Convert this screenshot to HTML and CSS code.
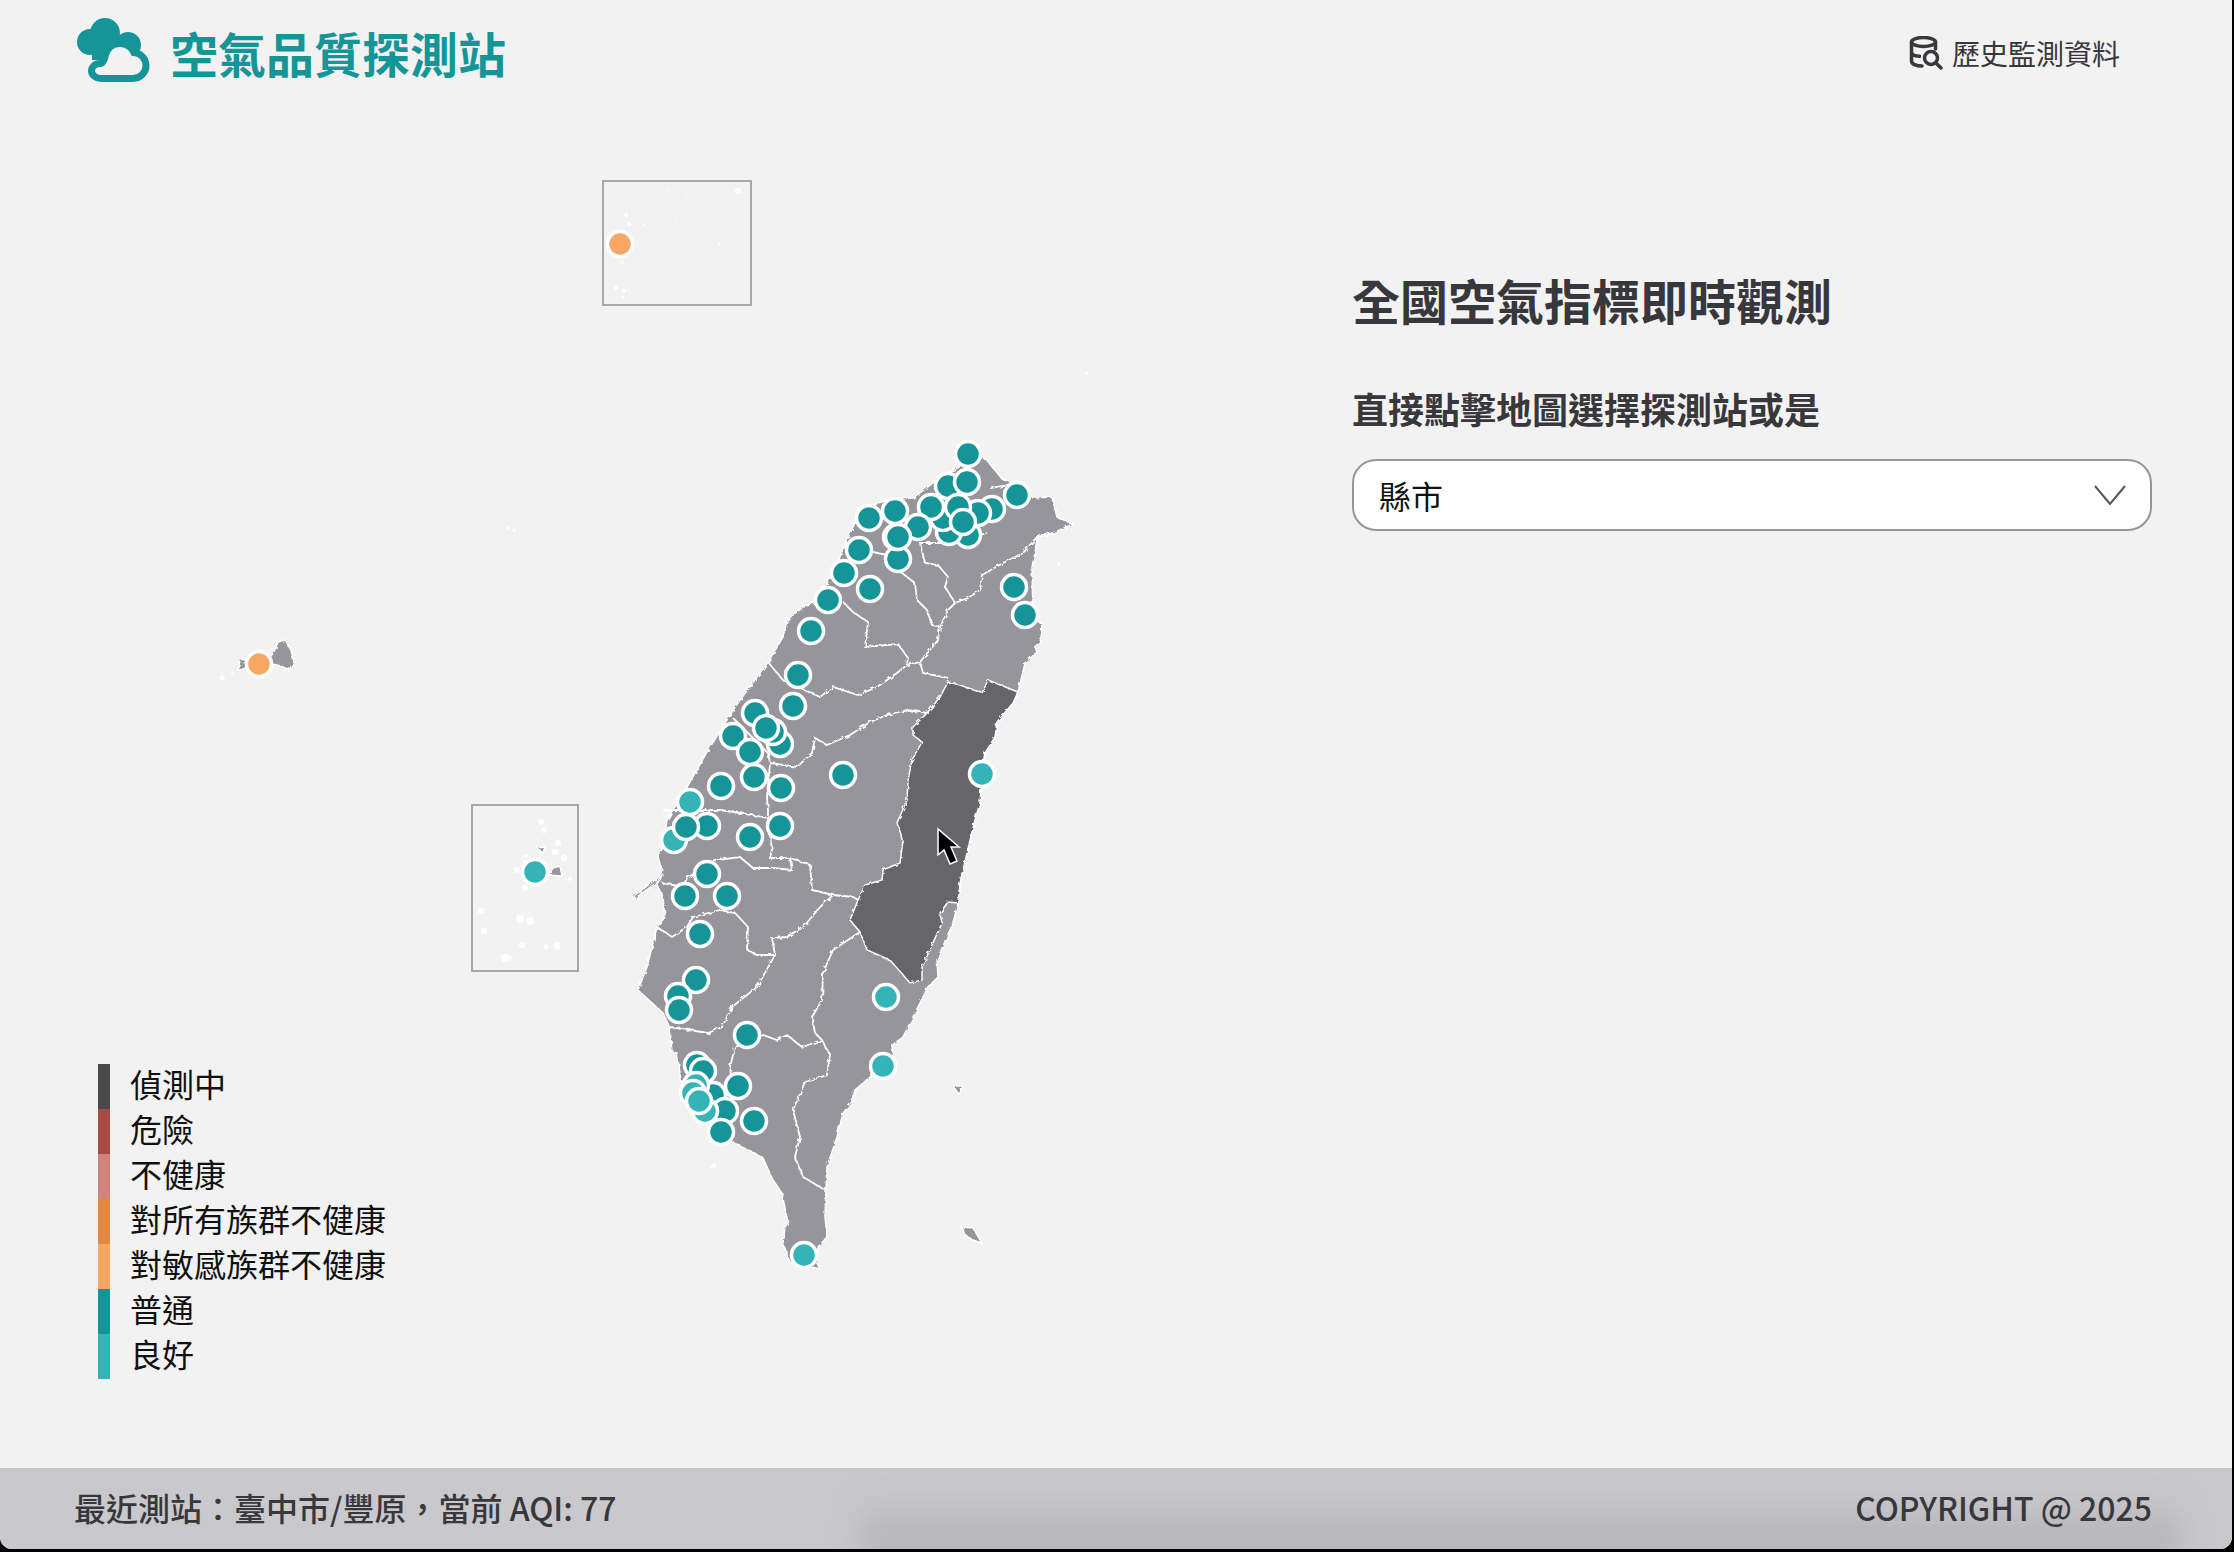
FILE: index.html
```html
<!DOCTYPE html>
<html lang="zh-Hant">
  <head>
    <meta charset="UTF-8" />
    <meta name="viewport" content="width=device-width, initial-scale=1.0" />
    <title>空氣品質探測站</title>
    <link rel="stylesheet" href="styles.css">
  </head>
  <body>
    <div class="page">
      <!-- Header -->
      <header class="top-bar">
        <div class="brand">
          <svg class="brand-icon" viewBox="76 16 76 68">
            <circle class="logo-fill" cx="105" cy="33" r="15" />
            <circle class="logo-fill" cx="90" cy="42" r="13" />
            <circle class="logo-fill" cx="128" cy="45" r="13" />
            <rect class="logo-fill" x="92" y="36" width="34" height="24" />
            <path class="logo-front" d="M101 78.5H133C141 78.5 146 72 146 65.5C146 58 140 53 134 52.5C132 47 126 43.5 120 43.5C112 43.5 107 49 105.5 55C105 60 102 63.5 100 63.5C95 63.5 91.5 67 91.5 71C91.5 75 96 78.5 101 78.5Z" />
          </svg>
          <span class="brand-name">空氣品質探測站</span>
        </div>
        <a class="history-link">
          <svg class="history-icon" viewBox="0 0 34 34">
            <ellipse cx="14.500" cy="6" rx="12" ry="4.500" />
            <path d="M2.500 6V25C2.500 28 7 30 13 30M2.500 16C2.500 18.500 6 20 10.500 20.300M26.500 6V13" />
            <circle cx="22" cy="22" r="6.500" />
            <path d="M27 27L32 32" />
          </svg>
          <span>歷史監測資料</span>
        </a>
      </header>

      <main class="content">
        <!-- Map -->
        <div class="map-area">
          <svg class="map" viewBox="0 110 1330 1359">
            <defs>
              <filter id="rough" x="-5%" y="-5%" width="110%" height="110%">
                <feTurbulence type="fractalNoise" baseFrequency="0.22" numOctaves="2" seed="4" />
                <feDisplacementMap in="SourceGraphic" scale="4" />
              </filter>
            </defs>

            <rect class="inset" x="603" y="181" width="148" height="124" />
            <rect class="inset" x="472" y="805" width="106" height="166" />

            <g filter="url(#rough)">
              <path class="land" d="M948 473L968 462L985 458L1003 480L1023 483L1033 498L1052 497L1057 517L1073 524L1053 533L1037 537L1035 553L1032 567L1033 620L1042 623L1041 640L1035 647L1037 652L1025 663L1018 692L1013 703L997 722L995 737L985 753L983 763L980 803L975 820L967 853L960 883L958 903L953 923L937 960L938 977L928 987L913 1017L903 1037L892 1045L893 1053L870 1077L855 1090L852 1102L843 1113L837 1137L827 1167L826 1190L825 1217L827 1237L818 1247L817 1263L820 1269L790 1262L783 1243L785 1227L788 1223L782 1193L773 1180L763 1158L733 1142L720 1137L693 1113L683 1093L677 1053L672 1052L670 1028L663 1013L640 992L638 990L647 967L657 927L665 917L663 897L657 885L662 870L658 857L663 847L667 820L677 803L687 787L707 752L735 707L768 662L783 637L787 620L803 607L817 602L833 573L853 527L860 510L887 500L913 498L937 480Z" />
              <path class="land-dark" d="M948 682L960 685L982 693L988 680L1018 692L1013 703L997 722L995 737L985 753L983 763L980 803L975 820L967 853L960 883L958 903L948 902L940 913L942 923L922 967L922 980L910 983L890 960L867 950L860 932L850 920L858 900L865 885L882 880L883 870L900 863L903 840L897 823L907 800L908 780L912 760L922 742L913 735L913 727L927 713L940 697Z" />
              <path class="borders" d="M1053 533L1037 537L1023 553L1003 563L982 575L980 590L968 598L955 603L948 610L940 627L938 640L920 662L923 673L948 678
                M1023 483L990 488M987 533L953 543L920 543L925 563L938 565L948 577L945 587L955 603
                M873 552L887 555L898 570L915 583L917 600L927 610L932 625L940 627
                M843 602L853 612L868 622L865 647L898 644L908 658L907 665L920 662
                M768 662L783 680L820 697L833 687L858 695L877 687L897 673L907 665
                M927 713L907 710L887 715L870 722L850 735L827 745L815 738L812 753L797 767L770 763L768 753L733 718
                M770 763L767 797L768 810L768 820M663 810L720 810L740 813L768 818
                M768 820L772 850L770 858L790 858L810 865L812 890L833 895L853 897L858 900
                M662 883L683 887L687 878L717 860L740 857L753 868L773 868L792 870L790 858
                M657 927L672 937L687 927L693 917L720 910L735 913L748 927L747 950L757 955L775 955
                M775 955L757 987L732 1007L722 1027L708 1033L670 1027
                M833 895L820 907L805 925L787 937L772 938L775 955
                M860 932L833 950L823 973L822 1000L812 1017L815 1033L822 1040L830 1055L827 1075L805 1082
                M805 1082L793 1110L800 1137L795 1157L803 1177L825 1190
                M822 1040L802 1047L787 1035L777 1040L763 1035L753 1040L735 1047L730 1067L732 1085L715 1120" />

              <!-- Outlying islands -->
              <path class="land" d="M268 660L274 652L278 642L285 640L291 650L294 662L289 670L281 666L272 664Z" />
              <path class="land" d="M240 660L246 659L245 669L238 670Z" />
              <path class="land" d="M953 1086L963 1086L959 1095Z" />
              <path class="land" d="M962 1227L973 1228L982 1243L973 1240L965 1235Z" />
              <path class="land" d="M710 1168L715 1163L714 1166Z" />
              <path class="land" d="M548 875L553 868L560 866L562 876Z" />
              <path class="land" d="M523 857L527 855L524 862Z" />
              <path class="land" d="M537 848L545 847L543 853Z" />
              <path class="land" d="M520 920L522 918L521 924Z" />
              <path class="land" d="M504 958L510 957L506 962Z" />
              <path class="land" d="M632 897L662 875L660 880L634 899Z" />
            </g>

            <!-- Tiny white islets -->
            <g class="islets">
              <circle cx="667" cy="190" r="1" /><circle cx="686" cy="197" r="1" />
              <circle cx="738" cy="191" r="3" /><circle cx="626" cy="215" r="2" />
              <circle cx="629" cy="224" r="2" /><circle cx="644" cy="225" r="1" />
              <circle cx="675" cy="221" r="1" /><circle cx="719" cy="244" r="1" />
              <circle cx="622" cy="262" r="1" /><circle cx="616" cy="288" r="2" />
              <circle cx="624" cy="291" r="2" /><circle cx="623" cy="297" r="1.500" />
              <circle cx="508" cy="528" r="1.500" /><circle cx="514" cy="530" r="1.500" />
              <circle cx="1087" cy="373" r="1.500" /><circle cx="1059" cy="564" r="1.500" />
              <circle cx="222" cy="678" r="2.500" /><circle cx="232" cy="673" r="1.500" />
              <circle cx="541" cy="822" r="3" /><circle cx="544" cy="830" r="3" />
              <circle cx="558" cy="843" r="3" /><circle cx="555" cy="852" r="3" />
              <circle cx="564" cy="858" r="3" /><circle cx="570" cy="879" r="2" />
              <circle cx="517" cy="870" r="3" /><circle cx="525" cy="888" r="3" />
              <circle cx="481" cy="911" r="3" /><circle cx="484" cy="931" r="3" />
              <circle cx="520" cy="919" r="4" /><circle cx="530" cy="921" r="4" />
              <circle cx="522" cy="945" r="3" /><circle cx="546" cy="947" r="2.500" />
              <circle cx="557" cy="946" r="3.500" /><circle cx="505" cy="958" r="4" />
            </g>

            <!-- Stations -->
            <g class="stations">
              <circle class="aqi-moderate" cx="968" cy="454" />
              <circle class="aqi-moderate" cx="948" cy="486" />
              <circle class="aqi-moderate" cx="1017" cy="495" />
              <circle class="aqi-moderate" cx="992" cy="509" />
              <circle class="aqi-moderate" cx="978" cy="513" />
              <circle class="aqi-moderate" cx="968" cy="535" />
              <circle class="aqi-moderate" cx="949" cy="532" />
              <circle class="aqi-moderate" cx="943" cy="518" />
              <circle class="aqi-moderate" cx="967" cy="482" />
              <circle class="aqi-moderate" cx="958" cy="507" />
              <circle class="aqi-moderate" cx="963" cy="522" />
              <circle class="aqi-moderate" cx="931" cy="507" />
              <circle class="aqi-moderate" cx="918" cy="527" />
              <circle class="aqi-moderate" cx="895" cy="511" />
              <circle class="aqi-moderate" cx="869" cy="518" />
              <circle class="aqi-moderate" cx="898" cy="559" />
              <circle class="aqi-moderate" cx="896" cy="537" />
              <circle class="aqi-moderate" cx="898" cy="537" />
              <circle class="aqi-moderate" cx="859" cy="550" />
              <circle class="aqi-moderate" cx="844" cy="573" />
              <circle class="aqi-moderate" cx="870" cy="589" />
              <circle class="aqi-moderate" cx="828" cy="600" />
              <circle class="aqi-moderate" cx="811" cy="631" />
              <circle class="aqi-moderate" cx="798" cy="675" />
              <circle class="aqi-moderate" cx="793" cy="706" />
              <circle class="aqi-moderate" cx="755" cy="713" />
              <circle class="aqi-moderate" cx="780" cy="744" />
              <circle class="aqi-moderate" cx="773" cy="732" />
              <circle class="aqi-moderate" cx="766" cy="728" />
              <circle class="aqi-moderate" cx="733" cy="736" />
              <circle class="aqi-moderate" cx="750" cy="752" />
              <circle class="aqi-moderate" cx="721" cy="786" />
              <circle class="aqi-moderate" cx="754" cy="777" />
              <circle class="aqi-moderate" cx="781" cy="788" />
              <circle class="aqi-moderate" cx="843" cy="775" />
              <circle class="aqi-moderate" cx="1014" cy="587" />
              <circle class="aqi-moderate" cx="1025" cy="615" />
              <circle class="aqi-good" cx="982" cy="774" />
              <circle class="aqi-good" cx="690" cy="802" />
              <circle class="aqi-good" cx="674" cy="840" />
              <circle class="aqi-moderate" cx="707" cy="826" />
              <circle class="aqi-moderate" cx="686" cy="827" />
              <circle class="aqi-moderate" cx="750" cy="837" />
              <circle class="aqi-moderate" cx="780" cy="826" />
              <circle class="aqi-moderate" cx="707" cy="874" />
              <circle class="aqi-moderate" cx="685" cy="896" />
              <circle class="aqi-moderate" cx="727" cy="896" />
              <circle class="aqi-moderate" cx="700" cy="934" />
              <circle class="aqi-moderate" cx="696" cy="980" />
              <circle class="aqi-moderate" cx="678" cy="996" />
              <circle class="aqi-moderate" cx="679" cy="1010" />
              <circle class="aqi-moderate" cx="747" cy="1035" />
              <circle class="aqi-good" cx="886" cy="997" />
              <circle class="aqi-good" cx="883" cy="1066" />
              <circle class="aqi-moderate" cx="697" cy="1065" />
              <circle class="aqi-moderate" cx="703" cy="1071" />
              <circle class="aqi-moderate" cx="713" cy="1095" />
              <circle class="aqi-moderate" cx="738" cy="1086" />
              <circle class="aqi-moderate" cx="725" cy="1111" />
              <circle class="aqi-moderate" cx="754" cy="1121" />
              <circle class="aqi-good" cx="705" cy="1111" />
              <circle class="aqi-moderate" cx="721" cy="1132" />
              <circle class="aqi-good" cx="696" cy="1085" />
              <circle class="aqi-good" cx="693" cy="1093" />
              <circle class="aqi-good" cx="699" cy="1101" />
              <circle class="aqi-good" cx="804" cy="1255" />
              <circle class="aqi-sensitive" cx="259" cy="664" />
              <circle class="aqi-sensitive" cx="620" cy="244" />
              <circle class="aqi-good" cx="535" cy="872" />
            </g>

            <path class="cursor" d="M938 829V855L944 850L950 864L957 861L951 847L959 847Z" />
          </svg>

          <!-- Legend -->
          <ul class="legend">
            <li class="legend-row"><span class="swatch swatch-detecting"></span>偵測中</li>
            <li class="legend-row"><span class="swatch swatch-danger"></span>危險</li>
            <li class="legend-row"><span class="swatch swatch-unhealthy"></span>不健康</li>
            <li class="legend-row"><span class="swatch swatch-all"></span>對所有族群不健康</li>
            <li class="legend-row"><span class="swatch swatch-sensitive"></span>對敏感族群不健康</li>
            <li class="legend-row"><span class="swatch swatch-moderate"></span>普通</li>
            <li class="legend-row"><span class="swatch swatch-good"></span>良好</li>
          </ul>
        </div>

        <!-- Side panel -->
        <section class="panel">
          <h1 class="panel-title">全國空氣指標即時觀測</h1>
          <h2 class="panel-subtitle">直接點擊地圖選擇探測站或是</h2>
          <div class="select-box">
            <span>縣市</span>
            <svg class="chevron" viewBox="0 0 32 20"><path d="M1 1L16 19L31 1" /></svg>
          </div>
        </section>
      </main>

      <footer class="bottom-bar">
        <span>最近測站：臺中市/豐原，當前 AQI: 77</span>
        <span>COPYRIGHT @ 2025</span>
      </footer>
    </div>
  </body>
</html>
```

FILE: styles.css
```css
/* Page frame */
html,
body {
  margin: 0;
  background: #000;
}

body {
  font-family: "Noto Sans CJK TC", "Noto Sans", sans-serif;
}

.page {
  display: flex;
  flex-direction: column;
  width: 2232px;
  height: 1549px;
  overflow: hidden;
  background: #f2f2f2;
  border-radius: 0 0 12px 12px;
}

/* Header */
.top-bar {
  display: flex;
  flex: none;
  align-items: center;
  justify-content: space-between;
  box-sizing: border-box;
  height: 110px;
  padding: 0 112px 0 76px;
}

.brand {
  display: flex;
  align-items: center;
  gap: 18px;
}

.brand-icon {
  width: 76px;
  height: 68px;
  margin-top: -11px;
}

.logo-fill {
  fill: #169598;
}

.logo-front {
  fill: #f2f2f2;
  stroke: #169598;
  stroke-width: 7;
}

.brand-name {
  margin-top: -6px;
  font-size: 48px;
  font-weight: 700;
  color: #169598;
}

.history-link {
  display: flex;
  align-items: center;
  gap: 9px;
  margin-bottom: 4px;
  font-size: 28px;
  color: #38383c;
}

.history-icon {
  width: 34px;
  height: 34px;
  fill: none;
  stroke: #38383c;
  stroke-width: 3.5;
  stroke-linecap: round;
}

/* Main */
.content {
  display: flex;
  flex: 1;
  min-height: 0;
}

.map-area {
  position: relative;
  width: 1352px;
  flex: none;
}

.map {
  display: block;
  width: 1330px;
  height: 1359px;
}

.inset {
  fill: none;
  stroke: #a8a7ac;
  stroke-width: 2;
}

.land {
  fill: #96959b;
  stroke: #fff;
  stroke-width: 1.5;
}

.land-dark {
  fill: #66656b;
  stroke: #fff;
  stroke-width: 1.5;
}

.borders {
  fill: none;
  stroke: #fff;
  stroke-width: 1.8;
}

.islets circle {
  fill: #fff;
}

.stations circle {
  r: 12.5px;
  stroke: #fff;
  stroke-width: 3.5;
}

.aqi-moderate {
  fill: #169598;
}

.aqi-good {
  fill: #35b4b8;
}

.aqi-sensitive {
  fill: #f6a764;
}

.cursor {
  fill: #000;
  stroke: #fff;
  stroke-width: 1.5;
}

/* Legend */
.legend {
  position: absolute;
  left: 98px;
  top: 954px;
  margin: 0;
  padding: 0;
  list-style: none;
}

.legend-row {
  display: flex;
  align-items: flex-start;
  gap: 20px;
  height: 45px;
  font-size: 32px;
  line-height: 38px;
  color: #111;
}

.swatch {
  width: 12px;
  height: 45px;
}

.swatch-detecting {
  background: #4a4a4c;
}

.swatch-danger {
  background: #a84b45;
}

.swatch-unhealthy {
  background: #cf837b;
}

.swatch-all {
  background: #e68a42;
}

.swatch-sensitive {
  background: #f6a764;
}

.swatch-moderate {
  background: #169598;
}

.swatch-good {
  background: #35b4b8;
}

/* Side panel */
.panel {
  flex: 1;
  padding: 151px 80px 0 0;
}

.panel-title {
  margin: 0;
  font-size: 48px;
  font-weight: 700;
  line-height: 76px;
  color: #38383c;
}

.panel-subtitle {
  margin: 41px 0 0;
  font-size: 36px;
  font-weight: 700;
  line-height: 60px;
  color: #38383c;
}

.select-box {
  display: flex;
  align-items: center;
  justify-content: space-between;
  box-sizing: border-box;
  height: 72px;
  margin-top: 21px;
  padding: 0 24px 0 25px;
  background: #fff;
  border: 2px solid #96959b;
  border-radius: 24px;
  font-size: 32px;
  color: #111;
}

.chevron {
  width: 32px;
  height: 20px;
  fill: none;
  stroke: #55555a;
  stroke-width: 2;
}

/* Footer */
.bottom-bar {
  position: relative;
  display: flex;
  flex: none;
  align-items: center;
  justify-content: space-between;
  box-sizing: border-box;
  height: 81px;
  padding: 0 80px 4px 74px;
  background: #c9c8cd;
  font-size: 32px;
  font-weight: 500;
  color: #38383c;
}

.bottom-bar span {
  position: relative;
}

.bottom-bar::before {
  content: "";
  position: absolute;
  left: 860px;
  right: 50px;
  top: 26px;
  bottom: -6px;
  background: linear-gradient(to bottom, transparent, #aeadb2);
  filter: blur(14px);
}
```
